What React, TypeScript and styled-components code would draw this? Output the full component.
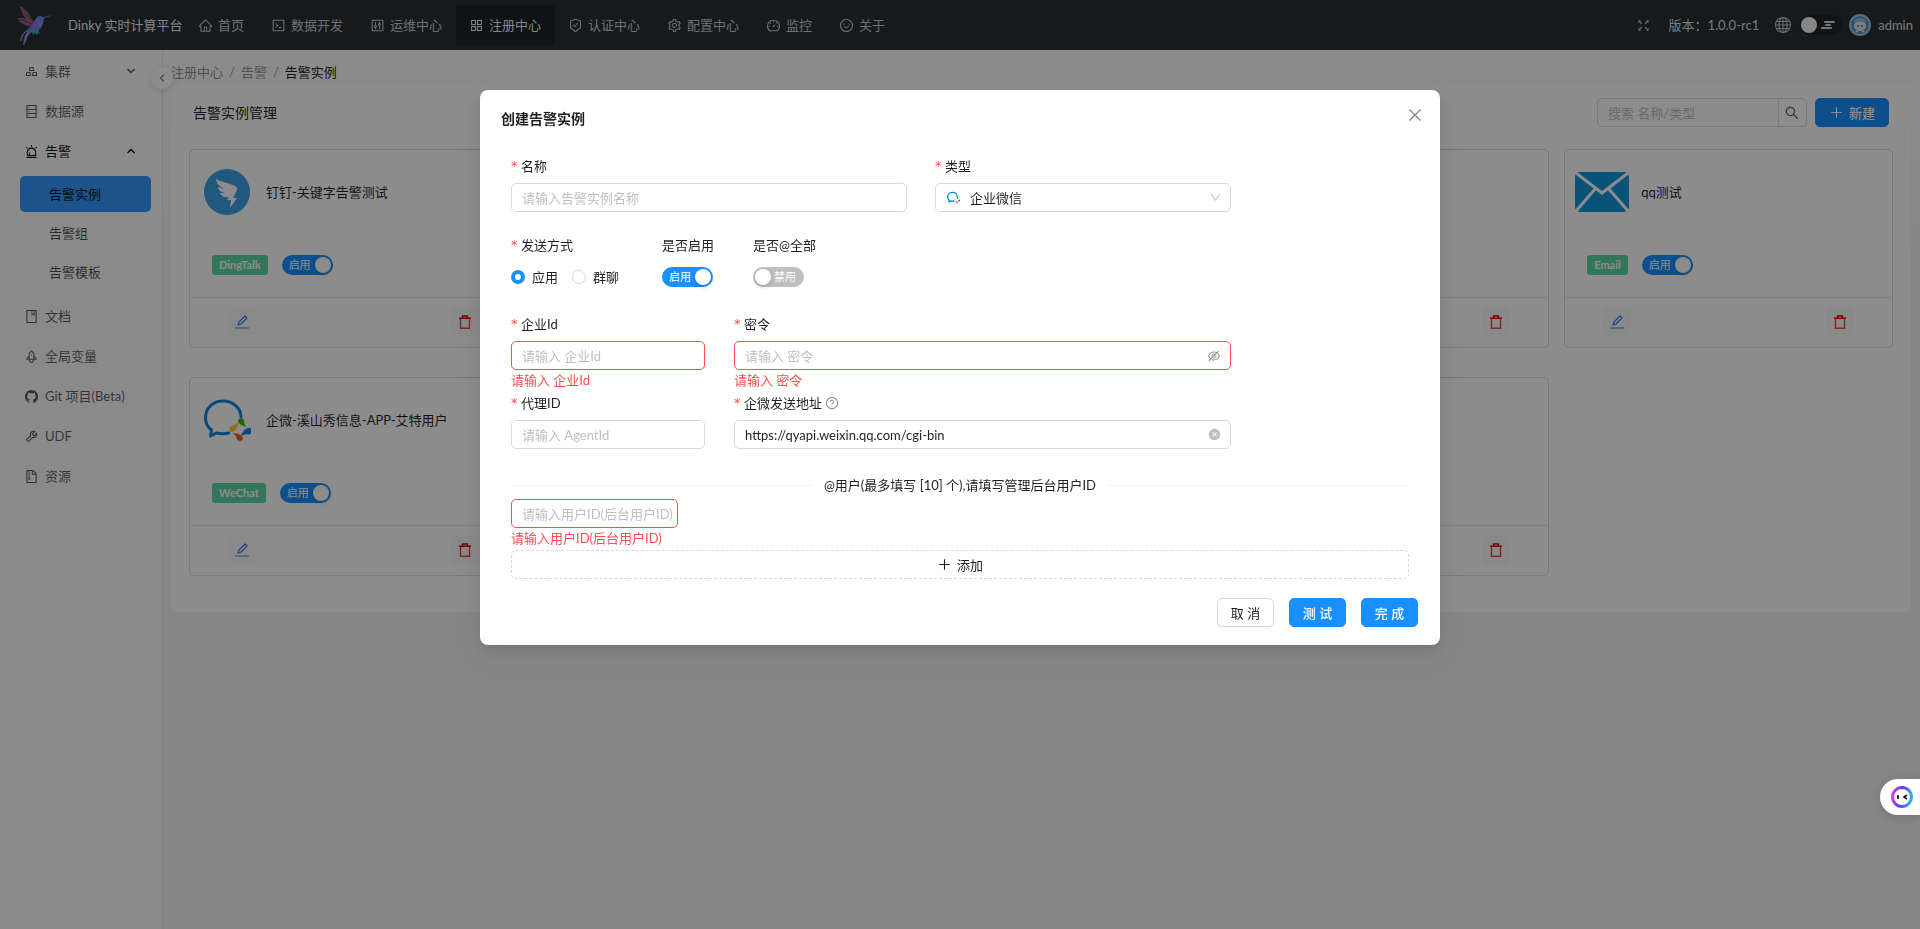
import React, { useId } from "react";
import styled, { createGlobalStyle, css } from "styled-components";
import {
  AiFillCloseCircle,
  AiFillGithub,
  AiOutlineAlert,
  AiOutlineAppstore,
  AiOutlineBook,
  AiOutlineClose,
  AiOutlineCode,
  AiOutlineControl,
  AiOutlineDashboard,
  AiOutlineDatabase,
  AiOutlineDown,
  AiOutlineEyeInvisible,
  AiOutlineFileZip,
  AiOutlineFullscreen,
  AiOutlineGold,
  AiOutlineHome,
  AiOutlinePlus,
  AiOutlineQuestionCircle,
  AiOutlineRocket,
  AiOutlineSafetyCertificate,
  AiOutlineSearch,
  AiOutlineSetting,
  AiOutlineSmile,
  AiOutlineTool,
} from "react-icons/ai";
import { BsGlobe } from "react-icons/bs";

const GlobalStyle = createGlobalStyle`
  *, *::before, *::after { box-sizing: border-box; }
  body {
    margin: 0;
    font-family: Lato, "Noto Sans CJK SC", sans-serif;
    font-size: 13px;
    line-height: 20px;
    color: rgba(0, 0, 0, 0.88);
  }
  button, input, select { font: inherit; color: inherit; }
  button { cursor: pointer; }
  ul { list-style: none; margin: 0; padding: 0; }
  a { color: inherit; text-decoration: none; }
  svg { display: block; flex: none; }
`;

/* ---------- page frame ---------- */

const Page = styled.div`
  min-height: 100vh;
  display: flex;
  flex-direction: column;
  background: linear-gradient(#ffffff, #f5f5f5 28%);
`;

const Header = styled.header`
  height: 50px;
  display: flex;
  align-items: center;
  padding: 0 7px 0 15px;
  background: #293036;
  color: rgba(255, 255, 255, 0.75);
`;

const Brand = styled.a`
  display: flex;
  flex: none;
  align-items: center;
  gap: 13px;
  width: 170px;
  color: rgba(255, 255, 255, 0.95);
  white-space: nowrap;
`;

const TopNav = styled.nav`
  display: flex;
  flex: 1;
`;

const TopLink = styled.a<{ $active?: boolean }>`
  display: flex;
  align-items: center;
  gap: 5px;
  height: 40px;
  padding: 0 14px 0 13px;
  border-radius: 4px;
  white-space: nowrap;
  ${(p) =>
    p.$active &&
    css`
      background: #1e2428;
      color: rgba(255, 255, 255, 0.95);
    `}
`;

const HeaderTools = styled.div`
  display: flex;
  align-items: center;
`;

const ToolButton = styled.button`
  display: flex;
  padding: 0;
  border: 0;
  background: none;
`;

const Version = styled.span`
  margin: 0 16px 0 17px;
  color: rgba(255, 255, 255, 0.85);
`;

const ThemeSwitch = styled.label`
  position: relative;
  display: flex;
  align-items: center;
  gap: 4px;
  width: 43px;
  height: 20px;
  margin: 0 7px 0 8px;
  padding: 0 2px;
  border-radius: 10px;
  background: #20262a;
`;

const ThemeThumb = styled.span`
  width: 16px;
  height: 16px;
  border-radius: 50%;
  background: #f4f4f4;
`;

const HiddenCheck = styled.input`
  position: absolute;
  inset: 0;
  width: 100%;
  height: 100%;
  margin: 0;
  opacity: 0;
  cursor: pointer;
`;

const UserName = styled.span`
  margin-left: 7px;
  color: rgba(255, 255, 255, 0.85);
`;

const Body = styled.div`
  flex: 1;
  display: flex;
`;

const Sider = styled.aside`
  position: relative;
  flex: none;
  width: 163px;
  padding: 3px 11px 0 20px;
  border-right: 1px solid #e6e6e6;
  background: rgba(255, 255, 255, 0.7);
`;

const Menu = styled.ul`
  display: flex;
  flex-direction: column;
  gap: 4px;
`;

const SubMenu = styled(Menu)`
  gap: 3px;
  margin: 7px 0 4px;
`;

const MenuLink = styled.a<{ $open?: boolean }>`
  display: flex;
  align-items: center;
  gap: 6px;
  height: 36px;
  padding: 0 16px 0 4px;
  color: ${(p) => (p.$open ? "rgba(0,0,0,0.95)" : "rgba(0,0,0,0.65)")};
`;

const MenuText = styled.span`
  flex: 1;
`;

const MenuArrow = styled.svg<{ $up?: boolean }>`
  width: 8px;
  height: 8px;
  transform: ${(p) => (p.$up ? "rotate(180deg)" : "none")};
`;

const SubLink = styled.a<{ $active?: boolean }>`
  display: flex;
  align-items: center;
  height: 36px;
  padding-left: 29px;
  border-radius: 5px;
  color: rgba(0, 0, 0, 0.7);
  ${(p) =>
    p.$active &&
    css`
      background: #3498fb;
      color: rgba(0, 0, 0, 0.95);
    `}
`;

const CollapseButton = styled.button`
  position: absolute;
  top: 17px;
  right: -11px;
  z-index: 1;
  display: flex;
  align-items: center;
  justify-content: center;
  width: 22px;
  height: 22px;
  padding: 0;
  border: 0;
  border-radius: 50%;
  background: #ffffff;
  color: rgba(0, 0, 0, 0.45);
  box-shadow: 0 2px 8px rgba(0, 0, 0, 0.12);
`;

const Main = styled.main`
  flex: 1;
  min-width: 0;
  padding: 0 9px 0 8px;
`;

const Crumbs = styled.nav`
  display: flex;
  align-items: center;
  gap: 6px;
  padding: 12px 0 2px;
  color: rgba(0, 0, 0, 0.45);
`;

const CrumbCurrent = styled.span`
  color: rgba(0, 0, 0, 0.9);
`;

const Panel = styled.section`
  padding: 14px 18px 36px;
  border-radius: 6px;
  background: #ffffff;
`;

const PanelBar = styled.div`
  display: flex;
  align-items: center;
  gap: 8px;
  padding: 0 4px;
  margin-bottom: 22px;
`;

const PanelTitle = styled.h1`
  flex: 1;
  margin: 0;
  font-size: 14px;
  font-weight: 400;
`;

const SearchBox = styled.form`
  display: flex;
  width: 210px;
  height: 29px;
  border: 1px solid #d9d9d9;
  border-radius: 5px;
`;

const SearchInput = styled.input`
  flex: 1;
  min-width: 0;
  padding: 0 10px;
  border: 0;
  background: none;
  outline: none;
  &::placeholder { color: #bfbfbf; opacity: 1; }
`;

const SearchButton = styled.button`
  display: flex;
  align-items: center;
  justify-content: center;
  width: 28px;
  padding: 0;
  border: 0;
  border-left: 1px solid #d9d9d9;
  background: none;
  color: rgba(0, 0, 0, 0.6);
`;

/* ---------- buttons ---------- */

const Button = styled.button<{ $primary?: boolean; $dashed?: boolean }>`
  display: flex;
  align-items: center;
  justify-content: center;
  gap: 5px;
  height: 29px;
  padding: 0 13px;
  border: 1px ${(p) => (p.$dashed ? "dashed" : "solid")} #d9d9d9;
  border-radius: 5px;
  background: #ffffff;
  box-shadow: 0 2px 0 rgba(0, 0, 0, 0.02);
  ${(p) =>
    p.$primary &&
    css`
      border-color: #1890ff;
      background: #1890ff;
      color: #ffffff;
      font-weight: 500;
    `}
`;

/* ---------- instance cards ---------- */

const CardGrid = styled.div`
  display: grid;
  grid-template-columns: repeat(5, minmax(0, 1fr));
  gap: 29px 15px;
`;

const Card = styled.article`
  border: 1px solid #d9d9d9;
  border-radius: 5px;
`;

const CardHead = styled.div`
  display: flex;
  align-items: center;
  gap: 12px;
  height: 85px;
  padding: 0 0 2px 10px;
`;

const CardLogo = styled.span`
  display: flex;
  justify-content: center;
  width: 54px;
`;

const CardState = styled.div`
  display: flex;
  align-items: center;
  gap: 14px;
  height: 62px;
  padding: 0 22px 2px;
`;

const Tag = styled.span`
  height: 20px;
  padding: 0 7px;
  border-radius: 3px;
  background: #5bd8a6;
  color: #ffffff;
  font-size: 11px;
  font-weight: 700;
`;

const CardActions = styled.div`
  display: flex;
  justify-content: space-between;
  padding: 10px 38px 11px;
  border-top: 1px solid #e8e8e8;
`;

const ActionButton = styled.button`
  display: flex;
  align-items: center;
  justify-content: center;
  width: 28px;
  height: 28px;
  padding: 0;
  border: 0;
  border-radius: 5px;
  background: rgba(0, 0, 0, 0.02);
`;

/* ---------- switch ---------- */

const SwitchTrack = styled.label<{ $on: boolean }>`
  position: relative;
  display: flex;
  flex-direction: ${(p) => (p.$on ? "row" : "row-reverse")};
  align-items: center;
  justify-content: space-between;
  width: 51px;
  height: 20px;
  padding: ${(p) => (p.$on ? "0 2px 0 7px" : "0 8px 0 2px")};
  border-radius: 10px;
  background: ${(p) => (p.$on ? "#1890ff" : "#bfbfbf")};
  color: #ffffff;
  font-size: 11px;
`;

const SwitchThumb = styled.span`
  width: 16px;
  height: 16px;
  border-radius: 50%;
  background: #ffffff;
  box-shadow: 0 2px 4px rgba(0, 35, 11, 0.2);
`;

function Switch({ on, label }: { on: boolean; label: string }) {
  return (
    <SwitchTrack $on={on}>
      <HiddenCheck type="checkbox" role="switch" defaultChecked={on} aria-label={label} />
      <span>{on ? "启用" : "禁用"}</span>
      <SwitchThumb />
    </SwitchTrack>
  );
}

/* ---------- dialog ---------- */

const Mask = styled.div`
  position: fixed;
  inset: 0;
  z-index: 10;
  overflow: auto;
  padding: 90px 0 24px;
  background: rgba(0, 0, 0, 0.45);
`;

const Dialog = styled.div`
  position: relative;
  width: 50%;
  min-width: 780px;
  margin: 0 auto;
  padding: 19px 22px 18px 21px;
  border-radius: 8px;
  background: #ffffff;
  box-shadow:
    0 6px 16px rgba(0, 0, 0, 0.08),
    0 3px 6px -4px rgba(0, 0, 0, 0.12),
    0 9px 28px 8px rgba(0, 0, 0, 0.05);
`;

const DialogTitle = styled.h2`
  margin: 0 0 27px;
  font-size: 14px;
  line-height: 20px;
  font-weight: 600;
`;

const CloseButton = styled.button`
  position: absolute;
  top: 15px;
  right: 15px;
  display: flex;
  align-items: center;
  justify-content: center;
  width: 20px;
  height: 20px;
  padding: 0;
  border: 0;
  background: none;
  color: rgba(0, 0, 0, 0.45);
`;

const FormBody = styled.form`
  padding: 0 9px 0 10px;
`;

const FormRow = styled.div<{ $gap?: number }>`
  display: flex;
  gap: ${(p) => p.$gap ?? 29}px;
  height: 79px;
`;

const Field = styled.div<{ $width?: number }>`
  flex: 0 1 auto;
  width: ${(p) => (p.$width ? `${p.$width}px` : "auto")};
`;

const FieldLabel = styled.label<{ $required?: boolean }>`
  display: flex;
  align-items: center;
  gap: 3px;
  height: 20px;
  margin-bottom: 7px;
  ${(p) =>
    p.$required &&
    css`
      &::before {
        content: "*";
        width: 7px;
        color: #ff4d4f;
        font-family: "DejaVu Sans", sans-serif;
      }
    `}
`;

const HelpIcon = styled(AiOutlineQuestionCircle)`
  color: rgba(0, 0, 0, 0.45);
`;

const Control = styled.div`
  position: relative;
  display: flex;
  align-items: center;
  height: 29px;
`;

const TextInput = styled.input<{ $error?: boolean }>`
  width: 100%;
  height: 29px;
  padding: 0 3px 0 10px;
  border: 1px solid ${(p) => (p.$error ? "#ff4d4f" : "#d9d9d9")};
  border-radius: 5px;
  background: #ffffff;
  outline: none;
  &::placeholder { color: #bfbfbf; opacity: 1; }
`;

const SelectInput = styled.select`
  width: 100%;
  height: 29px;
  padding: 0 30px 0 34px;
  border: 1px solid #d9d9d9;
  border-radius: 5px;
  background: #ffffff;
  appearance: none;
`;

const SelectLogo = styled.span`
  position: absolute;
  left: 12px;
  pointer-events: none;
`;

const SelectArrow = styled(AiOutlineDown)`
  position: absolute;
  right: 9px;
  color: rgba(0, 0, 0, 0.25);
  pointer-events: none;
`;

const SuffixButton = styled.button`
  position: absolute;
  right: 10px;
  display: flex;
  padding: 0;
  border: 0;
  background: none;
  color: rgba(0, 0, 0, 0.45);
`;

const ClearButton = styled(SuffixButton)`
  color: rgba(0, 0, 0, 0.25);
`;

const ErrorText = styled.div`
  color: #ff4d4f;
`;

const RadioSet = styled.div`
  display: flex;
  align-items: center;
  gap: 14px;
  height: 29px;
  min-width: 112px;
`;

const RadioLabel = styled.label`
  display: flex;
  align-items: center;
  gap: 7px;
`;

const Radio = styled.input`
  appearance: none;
  width: 14px;
  height: 14px;
  margin: 0;
  border: 1px solid #d9d9d9;
  border-radius: 50%;
  background: #ffffff;
  &:checked { border: 4px solid #1890ff; }
`;

const Divider = styled.div`
  display: flex;
  align-items: center;
  gap: 13px;
  margin: 3px 0 4px;
  &::before, &::after {
    content: "";
    flex: 1;
    border-top: 1px solid #f0f0f0;
  }
`;

const UserField = styled.div`
  height: 51px;
`;

const AddButton = styled(Button)`
  width: 100%;
`;

const Actions = styled.div`
  display: flex;
  justify-content: flex-end;
  gap: 15px;
  margin-top: 19px;
`;

const ActionItem = styled(Button)`
  width: 57px;
  padding: 0;
`;

const AssistantTab = styled.button`
  position: fixed;
  right: 0;
  bottom: 114px;
  z-index: 20;
  display: flex;
  align-items: center;
  width: 40px;
  height: 36px;
  padding: 0 0 0 11px;
  border: 0;
  border-radius: 18px 0 0 18px;
  background: #ffffff;
  box-shadow: 0 2px 10px rgba(0, 0, 0, 0.15);
`;

/* ---------- drawings ---------- */

function Hummingbird() {
  return (
    <svg width="40" height="42" viewBox="0 0 40 42" aria-hidden="true">
      <defs>
        <linearGradient id="birdBody" x1="0.8" y1="0" x2="0.1" y2="1">
          <stop offset="0" stopColor="#4c9fe0" />
          <stop offset="0.4" stopColor="#8f78e6" />
          <stop offset="1" stopColor="#6f6fe0" />
        </linearGradient>
      </defs>
      <path d="M5 2c4 2 8 6 10 10l3 5-1 3c-5-3-10-9-12-18z" fill="#b8687f" />
      <path d="M2 14c5-1 11 1 15 5l1 3c-6 1-12-2-16-8z" fill="#94608f" />
      <path d="M6 5c3 5 7 9 11 12M8 4c2 4 5 8 9 11M4 15c4 1 8 3 13 5" stroke="#3c2a44" strokeWidth="0.700" fill="none" />
      <path d="M21 15c1-3 4-4 7-2l10-2-9 3c0 3-1 5-2 8-1 3-4 5-8 5-3 0-5 1-7 3 0-4 2-7 5-9 1-3 2-4 4-6z" fill="url(#birdBody)" />
      <path d="M25 16c2 2 2 5 0 8-1-3-1-5 0-8z" fill="#45c4cf" />
      <path d="M15 26l-1 4 3-2 1 3 2-2 2 2 1-2 2 1-2-5z" fill="#43a5cf" />
      <path d="M13 26c-5 3-7 7-7 11M14 27c-4 4-5 8-5 14M15 28c-3 3-4 6-5 10" stroke="#8f9ad0" strokeWidth="1.300" fill="none" />
    </svg>
  );
}

function DingTalkLogo() {
  return (
    <svg width="46" height="46" viewBox="0 0 46 46" aria-hidden="true">
      <circle cx="23" cy="23" r="23" fill="#3ba1e6" />
      <path
        d="M12 10c5 3 13 4 19 7 2 1 3 3 1 6l-3 6h4L26 39l1-8h-4l2-3c-5 1-8-1-9-4l5 0c-4-1-7-3-7-6l6 2c-5-3-8-6-8-10z"
        fill="#ffffff"
      />
    </svg>
  );
}

function WeComLogo({ size = 48 }: { size?: number }) {
  return (
    <svg width={size} height={size} viewBox="0 0 48 48" aria-hidden="true">
      <path
        d="M38 21c0-9-8-16-18-16S2.500 12 2.500 22c0 5 2 9 6 12l-1 6 6-3c4 1 8 1 12 0"
        fill="none"
        stroke="#0a86e8"
        strokeWidth={size < 20 ? 5 : 3}
        strokeLinecap="round"
        strokeLinejoin="round"
      />
      <path d="M35 25a3.200 3.200 0 0 1 6-1c0 3 1 5 2 7-3-1-8-3-8-6z" fill="#3fb80e" />
      <path d="M47 32a3.200 3.200 0 0 1-3 6c-2 0-3 1-6 2 1-3 4-9 9-8z" fill="#0a82e6" />
      <path d="M40 43a3.200 3.200 0 0 1-6 0c-1-3-2-4-4-6 4 0 10 2 10 6z" fill="#f4631b" />
      <path d="M28 36a3.200 3.200 0 0 1 1-6c3-1 4-2 6-4 0 4-2 10-7 10z" fill="#ffcd1a" />
    </svg>
  );
}

function MailLogo() {
  return (
    <svg width="54" height="40" viewBox="0 0 54 40" aria-hidden="true">
      <rect width="54" height="40" rx="5" fill="#1296db" />
      <path d="M1 1l26 20L53 1M1 39l20-23M53 39L33 16" fill="none" stroke="#ffffff" strokeWidth="3" />
    </svg>
  );
}

function EditIcon() {
  return (
    <svg width="14" height="14" viewBox="0 0 14 14" fill="none" aria-hidden="true">
      <path d="M3 10l1-3 6-6 2 2-6 6z" stroke="#2f7df6" strokeWidth="1.200" strokeLinejoin="round" />
      <path d="M0 13h14" stroke="#6aa3f8" strokeWidth="1.400" />
    </svg>
  );
}

function DeleteIcon() {
  return (
    <svg width="14" height="14" viewBox="0 0 14 14" fill="none" aria-hidden="true">
      <path d="M2.500 3.500v9.800h9V3.500" stroke="#e8464b" strokeWidth="1.400" />
      <path d="M1 3.300h12M4.500 3V1h5v2" stroke="#e00000" strokeWidth="1.400" />
    </svg>
  );
}

function CloudLines() {
  return (
    <svg width="14" height="10" viewBox="0 0 14 10" stroke="#d8d8d8" strokeWidth="2" strokeLinecap="round" aria-hidden="true">
      <path d="M4 2h9M1 8h9M5 5h4" />
    </svg>
  );
}

function Avatar() {
  return (
    <svg width="22" height="22" viewBox="0 0 22 22" aria-hidden="true">
      <circle cx="11" cy="11" r="11" fill="#a9c7dc" />
      <circle cx="11" cy="11" r="9" fill="#4a96d2" />
      <path d="M5 7c2-4 10-4 12 0l-1 3H6z" fill="#8fc3ea" />
      <rect x="5" y="8" width="12" height="8" rx="4" fill="#e6e2e4" />
      <circle cx="9" cy="12" r="1" fill="#4a6c98" />
      <circle cx="13" cy="12" r="1" fill="#4a6c98" />
      <path d="M7 18c2-2 6-2 8 0" stroke="#cfe4f4" strokeWidth="2" />
    </svg>
  );
}

function AssistantFace() {
  return (
    <svg width="22" height="22" viewBox="0 0 22 22" aria-hidden="true">
      <defs>
        <linearGradient id="ring" x1="0" y1="0.600" x2="1" y2="0.800">
          <stop offset="0" stopColor="#c63df5" />
          <stop offset="0.400" stopColor="#5a3df0" />
          <stop offset="1" stopColor="#2fb6ee" />
        </linearGradient>
      </defs>
      <circle cx="11" cy="11" r="9.500" fill="#ffffff" stroke="url(#ring)" strokeWidth="3" />
      <rect x="6" y="9" width="2" height="4" rx="1" fill="#111111" />
      <path d="M16 9l-3 2 3 2" fill="none" stroke="#111111" strokeWidth="1.600" />
    </svg>
  );
}

function Arrow({ up }: { up?: boolean }) {
  return (
    <MenuArrow $up={up} viewBox="0 0 8 8" fill="none" stroke="currentColor" strokeWidth="1.400" aria-hidden="true">
      <path d="M0.500 2L4 5.500 7.500 2" />
    </MenuArrow>
  );
}

/* ---------- data ---------- */

const topItems = [
  { text: "首页", Icon: AiOutlineHome },
  { text: "数据开发", Icon: AiOutlineCode },
  { text: "运维中心", Icon: AiOutlineControl },
  { text: "注册中心", Icon: AiOutlineAppstore, active: true },
  { text: "认证中心", Icon: AiOutlineSafetyCertificate },
  { text: "配置中心", Icon: AiOutlineSetting },
  { text: "监控", Icon: AiOutlineDashboard },
  { text: "关于", Icon: AiOutlineSmile },
];

const lowerItems = [
  { text: "文档", Icon: AiOutlineBook },
  { text: "全局变量", Icon: AiOutlineRocket },
  { text: "Git 项目(Beta)", Icon: AiFillGithub },
  { text: "UDF", Icon: AiOutlineTool },
  { text: "资源", Icon: AiOutlineFileZip },
];

type Kind = "DingTalk" | "WeChat" | "Email";

const instances: { name?: string; kind?: Kind }[] = [
  { name: "钉钉-关键字告警测试", kind: "DingTalk" },
  {},
  {},
  {},
  { name: "qq测试", kind: "Email" },
  { name: "企微-溪山秀信息-APP-艾特用户", kind: "WeChat" },
  {},
  {},
  {},
];

const logos: Record<Kind, React.ReactNode> = {
  DingTalk: <DingTalkLogo />,
  WeChat: <WeComLogo />,
  Email: <MailLogo />,
};

function InstanceCard({ name, kind }: { name?: string; kind?: Kind }) {
  return (
    <Card>
      <CardHead>
        <CardLogo>{kind && logos[kind]}</CardLogo>
        <span>{name}</span>
      </CardHead>
      <CardState>
        {kind && (
          <>
            <Tag>{kind}</Tag>
            <Switch on label="启用" />
          </>
        )}
      </CardState>
      <CardActions>
        <ActionButton type="button" aria-label="编辑"><EditIcon /></ActionButton>
        <ActionButton type="button" aria-label="删除"><DeleteIcon /></ActionButton>
      </CardActions>
    </Card>
  );
}

function CreateDialog() {
  const id = useId();
  return (
    <Dialog role="dialog" aria-modal="true" aria-labelledby={`${id}title`}>
      <DialogTitle id={`${id}title`}>创建告警实例</DialogTitle>
      <CloseButton type="button" aria-label="关闭"><AiOutlineClose size={18} /></CloseButton>
      <FormBody>
        <FormRow $gap={28}>
          <Field $width={396}>
            <FieldLabel $required htmlFor={`${id}name`}>名称</FieldLabel>
            <TextInput id={`${id}name`} placeholder="请输入告警实例名称" />
          </Field>
          <Field $width={296}>
            <FieldLabel $required htmlFor={`${id}type`}>类型</FieldLabel>
            <Control>
              <SelectInput id={`${id}type`}>
                <option>企业微信</option>
              </SelectInput>
              <SelectLogo><WeComLogo size={13} /></SelectLogo>
              <SelectArrow size={13} />
            </Control>
          </Field>
        </FormRow>
        <FormRow $gap={39}>
          <Field>
            <FieldLabel as="div" $required>发送方式</FieldLabel>
            <RadioSet role="radiogroup" aria-label="发送方式">
              <RadioLabel><Radio type="radio" name="send" defaultChecked />应用</RadioLabel>
              <RadioLabel><Radio type="radio" name="send" />群聊</RadioLabel>
            </RadioSet>
          </Field>
          <Field>
            <FieldLabel as="div">是否启用</FieldLabel>
            <Control><Switch on label="是否启用" /></Control>
          </Field>
          <Field>
            <FieldLabel as="div">是否@全部</FieldLabel>
            <Control><Switch on={false} label="是否@全部" /></Control>
          </Field>
        </FormRow>
        <FormRow>
          <Field $width={194}>
            <FieldLabel $required htmlFor={`${id}corp`}>企业Id</FieldLabel>
            <TextInput $error id={`${id}corp`} placeholder="请输入 企业Id" />
            <ErrorText>请输入 企业Id</ErrorText>
          </Field>
          <Field $width={497}>
            <FieldLabel $required htmlFor={`${id}secret`}>密令</FieldLabel>
            <Control>
              <TextInput $error id={`${id}secret`} type="password" placeholder="请输入 密令" />
              <SuffixButton type="button" aria-label="显示密令"><AiOutlineEyeInvisible size={14} /></SuffixButton>
            </Control>
            <ErrorText>请输入 密令</ErrorText>
          </Field>
        </FormRow>
        <FormRow>
          <Field $width={194}>
            <FieldLabel $required htmlFor={`${id}agent`}>代理ID</FieldLabel>
            <TextInput id={`${id}agent`} placeholder="请输入 AgentId" />
          </Field>
          <Field $width={497}>
            <FieldLabel $required htmlFor={`${id}url`}>企微发送地址<HelpIcon size={14} /></FieldLabel>
            <Control>
              <TextInput id={`${id}url`} defaultValue="https://qyapi.weixin.qq.com/cgi-bin" />
              <ClearButton type="button" aria-label="清除"><AiFillCloseCircle size={13} /></ClearButton>
            </Control>
          </Field>
        </FormRow>
        <Divider>@用户(最多填写 [10] 个),请填写管理后台用户ID</Divider>
        <UserField>
          <Field $width={167}>
            <TextInput $error aria-label="用户ID" placeholder="请输入用户ID(后台用户ID)" />
          </Field>
          <ErrorText>请输入用户ID(后台用户ID)</ErrorText>
        </UserField>
        <AddButton type="button" $dashed><AiOutlinePlus size={15} />添加</AddButton>
      </FormBody>
      <Actions>
        <ActionItem type="button">取 消</ActionItem>
        <ActionItem type="button" $primary>测 试</ActionItem>
        <ActionItem type="button" $primary>完 成</ActionItem>
      </Actions>
    </Dialog>
  );
}

export default function App() {
  return (
    <>
      <GlobalStyle />
      <Page>
        <Header>
          <Brand href="#"><Hummingbird />Dinky 实时计算平台</Brand>
          <TopNav>
            {topItems.map(({ text, Icon, active }) => (
              <TopLink key={text} href="#" $active={active}><Icon size={15} />{text}</TopLink>
            ))}
          </TopNav>
          <HeaderTools>
            <ToolButton type="button" aria-label="全屏"><AiOutlineFullscreen size={15} /></ToolButton>
            <Version>版本：1.0.0-rc1</Version>
            <ToolButton type="button" aria-label="语言"><BsGlobe size={16} /></ToolButton>
            <ThemeSwitch>
              <HiddenCheck type="checkbox" role="switch" aria-label="主题" />
              <ThemeThumb />
              <CloudLines />
            </ThemeSwitch>
            <Avatar />
            <UserName>admin</UserName>
          </HeaderTools>
        </Header>
        <Body>
          <Sider>
            <Menu>
              <li><MenuLink href="#"><AiOutlineGold size={15} /><MenuText>集群</MenuText><Arrow /></MenuLink></li>
              <li><MenuLink href="#"><AiOutlineDatabase size={15} /><MenuText>数据源</MenuText></MenuLink></li>
              <li>
                <MenuLink href="#" $open><AiOutlineAlert size={15} /><MenuText>告警</MenuText><Arrow up /></MenuLink>
                <SubMenu>
                  <li><SubLink href="#" $active>告警实例</SubLink></li>
                  <li><SubLink href="#">告警组</SubLink></li>
                  <li><SubLink href="#">告警模板</SubLink></li>
                </SubMenu>
              </li>
              {lowerItems.map(({ text, Icon }) => (
                <li key={text}><MenuLink href="#"><Icon size={15} /><MenuText>{text}</MenuText></MenuLink></li>
              ))}
            </Menu>
            <CollapseButton type="button" aria-label="收起菜单">
              <svg width="8" height="8" viewBox="0 0 8 8" fill="none" stroke="currentColor" strokeWidth="1.400">
                <path d="M6 0.500L2.500 4 6 7.500" />
              </svg>
            </CollapseButton>
          </Sider>
          <Main>
            <Crumbs aria-label="面包屑">
              <a href="#">注册中心</a><span>/</span><a href="#">告警</a><span>/</span><CrumbCurrent>告警实例</CrumbCurrent>
            </Crumbs>
            <Panel>
              <PanelBar>
                <PanelTitle>告警实例管理</PanelTitle>
                <SearchBox role="search">
                  <SearchInput aria-label="搜索" placeholder="搜索 名称/类型" />
                  <SearchButton type="button" aria-label="搜索"><AiOutlineSearch size={16} /></SearchButton>
                </SearchBox>
                <Button type="button" $primary><AiOutlinePlus size={15} />新建</Button>
              </PanelBar>
              <CardGrid>
                {instances.map((item, i) => (
                  <InstanceCard key={i} {...item} />
                ))}
              </CardGrid>
            </Panel>
          </Main>
        </Body>
      </Page>
      <Mask><CreateDialog /></Mask>
      <AssistantTab type="button" aria-label="助手"><AssistantFace /></AssistantTab>
    </>
  );
}
